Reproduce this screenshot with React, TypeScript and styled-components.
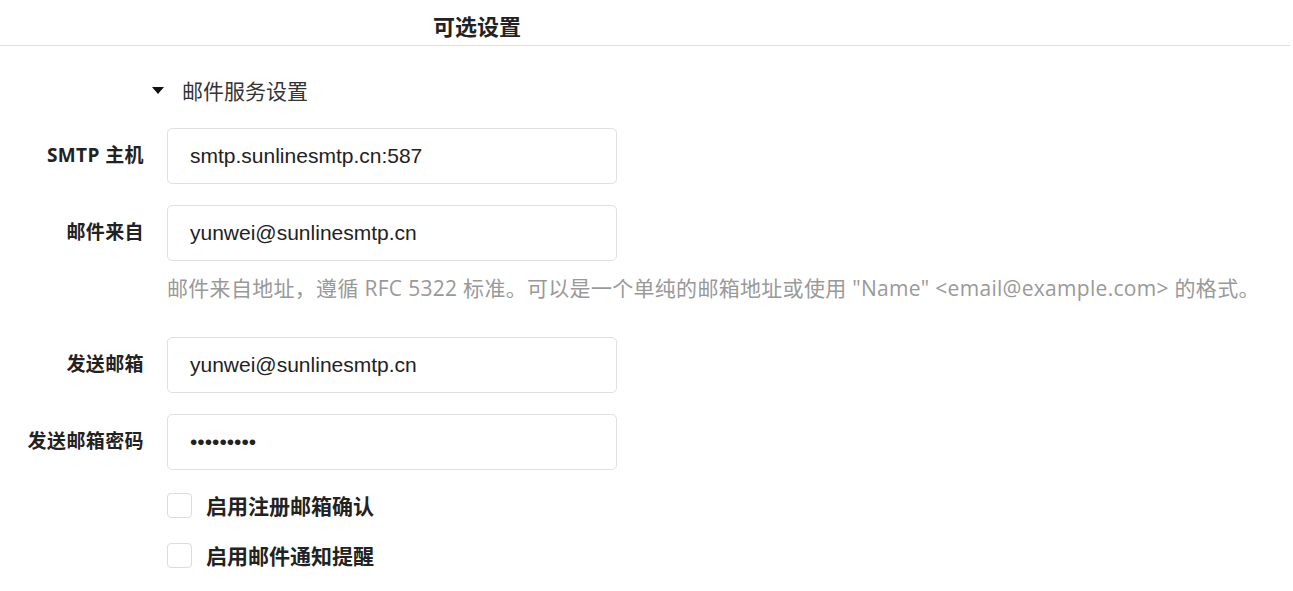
import styled, { createGlobalStyle } from "styled-components";

const GlobalStyle = createGlobalStyle`
  html, body {
    margin: 0;
    padding: 0;
    background: #fff;
  }
  body {
    font-family: "Liberation Sans", "Noto Sans CJK SC", sans-serif;
    color: #333;
  }
`;

const Page = styled.div`
  width: 1290px;
`;

const Header = styled.div`
  box-sizing: border-box;
  height: 46px;
  padding: 9px 0 0 433px;
  border-bottom: 1px solid #dedede;
  font-family: "Noto Sans CJK SC", sans-serif;
  font-size: 22px;
  font-weight: 700;
  line-height: 33px;
  color: #222;
`;

const Content = styled.div`
  padding-top: 29px;
`;

const Summary = styled.div`
  display: flex;
  align-items: center;
  gap: 18px;
  height: 30px;
  padding-left: 152px;
  margin-bottom: 23px;
  font-family: "Noto Sans CJK SC", sans-serif;
  font-size: 21px;
  color: #333;
`;

const Stack = styled.div`
  display: flex;
  flex-direction: column;
  gap: 21px;
`;

const Row = styled.div`
  display: grid;
  grid-template-columns: 144px 450px;
  column-gap: 23px;
  align-items: center;
`;

const Label = styled.label`
  margin-bottom: 4px;
  text-align: right;
  font-family: "Open Sans", "Noto Sans CJK SC", sans-serif;
  font-size: 19px;
  font-weight: 700;
  letter-spacing: 0.4px;
  color: #222;
  white-space: nowrap;
`;

const Input = styled.input`
  box-sizing: border-box;
  width: 450px;
  height: 56px;
  padding: 0 22px;
  border: 1px solid #e0e0e0;
  border-radius: 5px;
  background: #fff;
  font-family: "Liberation Sans", Arial, sans-serif;
  font-size: 21px;
  color: #222;
  outline: none;
`;

const Hint = styled.div<{ $after?: number }>`
  margin: -9px 0 ${(p) => p.$after ?? 0}px 167px;
  line-height: 30px;
  font-family: "Open Sans", "Noto Sans CJK SC", sans-serif;
  font-size: 21px;
  letter-spacing: 0.3px;
  color: #999;
  white-space: nowrap;
`;

const CheckRow = styled.label`
  display: flex;
  align-items: center;
  gap: 14px;
  height: 29px;
  padding-left: 167px;
  font-family: "Noto Sans CJK SC", sans-serif;
  font-size: 21px;
  font-weight: 700;
  color: #222;
`;

const CheckText = styled.span`
  margin-bottom: 2px;
`;

const Box = styled.input`
  appearance: none;
  margin: 0;
  width: 25px;
  height: 25px;
  border: 1px solid #dcdcdc;
  border-radius: 4px;
  background: #fff;
`;

const Caret = () => (
  <svg width="12" height="7" viewBox="0 0 12 7">
    <polygon points="0,0 12,0 6,7" fill="#111" />
  </svg>
);

function Field({ label, value, type = "text" }: { label: string; value: string; type?: string }) {
  return (
    <Row>
      <Label>{label}</Label>
      <Input type={type} defaultValue={value} readOnly />
    </Row>
  );
}

function App() {
  return (
    <Page>
      <GlobalStyle />
      <Header>可选设置</Header>
      <Content>
        <Summary>
          <Caret />
          邮件服务设置
        </Summary>
        <Stack>
          <Field label="SMTP 主机" value="smtp.sunlinesmtp.cn:587" />
          <Field label="邮件来自" value="yunwei@sunlinesmtp.cn" />
          <Hint $after={13}>
            邮件来自地址，遵循 RFC 5322 标准。可以是一个单纯的邮箱地址或使用 "Name" &lt;email@example.com&gt; 的格式。
          </Hint>
          <Field label="发送邮箱" value="yunwei@sunlinesmtp.cn" />
          <Field label="发送邮箱密码" value="123456789" type="password" />
          <CheckRow>
            <Box type="checkbox" />
            <CheckText>启用注册邮箱确认</CheckText>
          </CheckRow>
          <CheckRow>
            <Box type="checkbox" />
            <CheckText>启用邮件通知提醒</CheckText>
          </CheckRow>
        </Stack>
      </Content>
    </Page>
  );
}

export default App;
